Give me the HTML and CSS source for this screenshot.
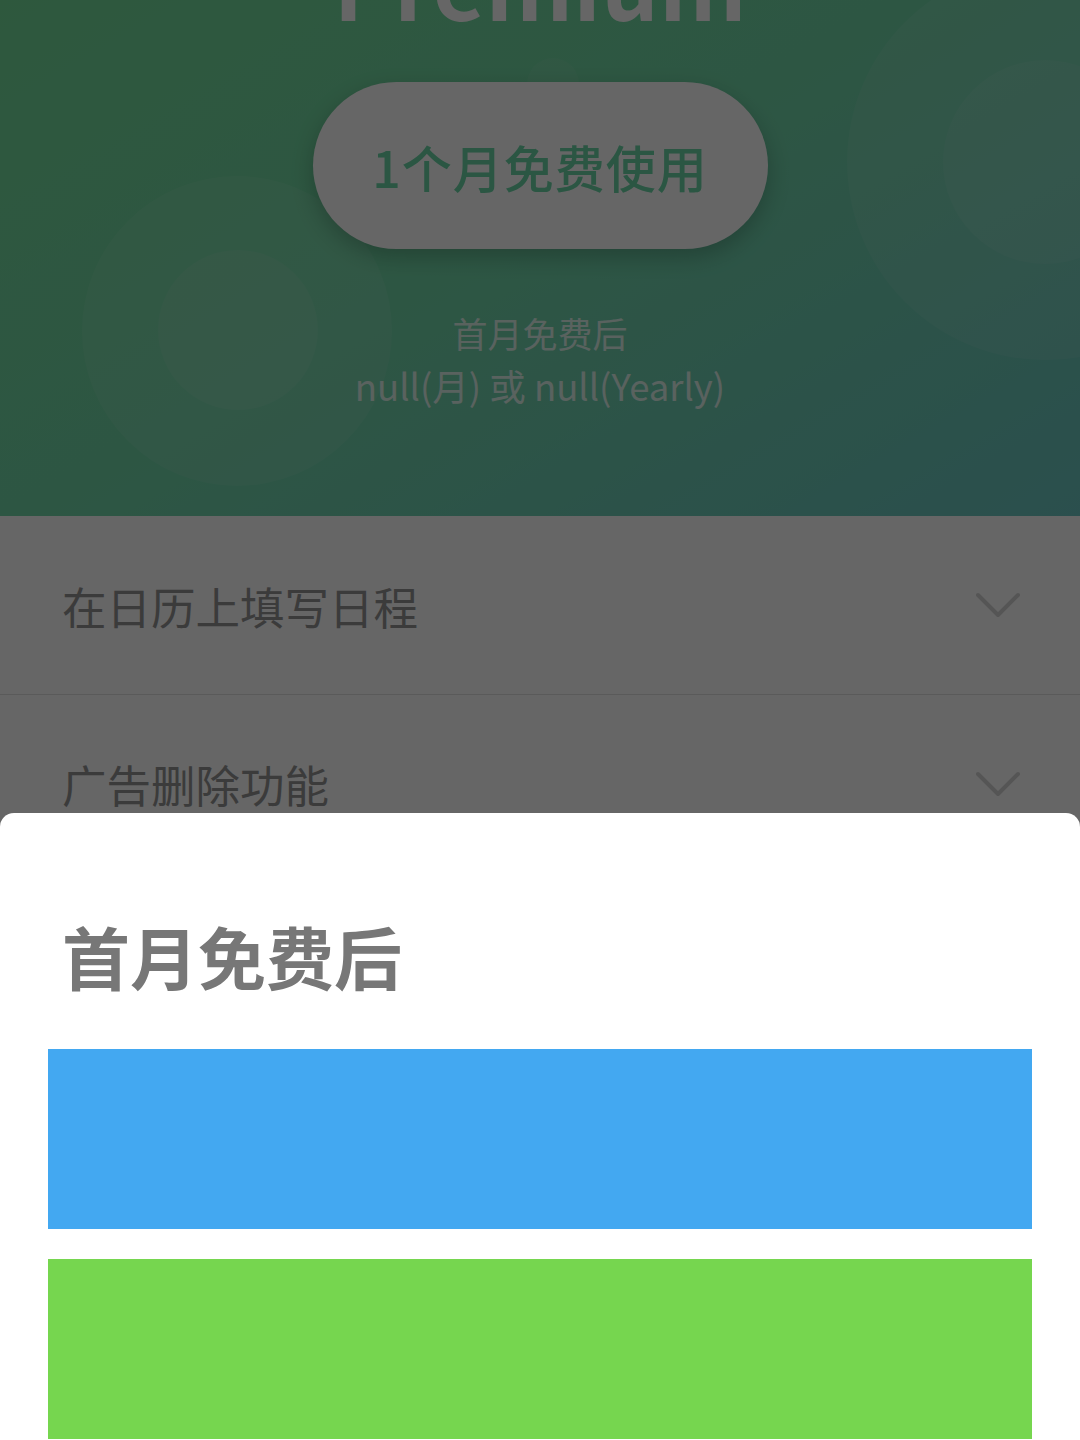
FILE: index.html
```html
<!DOCTYPE html>
<html lang="zh-CN">
<head>
<meta charset="utf-8">
<title>Premium</title>
<link rel="stylesheet" href="styles.css">
</head>
<body>
<div class="screen">
  <header class="hero">
    <span class="ring ring-left"></span>
    <span class="ring ring-left-inner"></span>
    <span class="ring ring-right"></span>
    <span class="ring ring-right-inner"></span>
    <span class="ring ring-top"></span>

    <h1 class="hero-title">Premium</h1>
    <button class="trial-btn" type="button">1个月免费使用</button>
    <p class="price-note">
      <span class="price-lead">首月免费后</span>
      <span class="price-values">null(月) 或 null(Yearly)</span>
    </p>
  </header>

  <ul class="features">
    <li class="feature">
      <span class="feature-label">在日历上填写日程</span>
      <svg class="chevron" viewBox="0 0 44 26" aria-hidden="true"><path d="M2 3 L22 23 L42 3"/></svg>
    </li>
    <li class="feature">
      <span class="feature-label">广告删除功能</span>
      <svg class="chevron" viewBox="0 0 44 26" aria-hidden="true"><path d="M2 3 L22 23 L42 3"/></svg>
    </li>
  </ul>

  <div class="scrim"></div>

  <section class="sheet">
    <h2 class="sheet-title">首月免费后</h2>
    <div class="plan plan-monthly"></div>
    <div class="plan plan-yearly"></div>
  </section>
</div>
</body>
</html>
```

FILE: styles.css
```css
* {
  box-sizing: border-box;
}

html, body {
  margin: 0;
  padding: 0;
}

body {
  font-family: "Noto Sans CJK SC", "Noto Sans", sans-serif;
  background: #ffffff;
}

.screen {
  position: relative;
  width: 1080px;
  height: 1440px;
  overflow: hidden;
  background: #ffffff;
}

/* ---------- hero ---------- */
.hero {
  position: relative;
  height: 516px;
  overflow: hidden;
  display: flex;
  flex-direction: column;
  align-items: center;
  background: linear-gradient(150deg, #74dd9a 0%, #72d8a8 45%, #6bc6c2 100%);
}

.ring {
  position: absolute;
  border-radius: 50%;
  background: rgba(255, 255, 255, 0.07);
}

.ring-left {
  left: 82px;
  top: 176px;
  width: 310px;
  height: 310px;
}

.ring-left-inner {
  left: 158px;
  top: 250px;
  width: 160px;
  height: 160px;
}

.ring-right {
  left: 847px;
  top: -36px;
  width: 396px;
  height: 396px;
}

.ring-right-inner {
  left: 943px;
  top: 60px;
  width: 204px;
  height: 204px;
}

.ring-top {
  left: 527px;
  top: 58px;
  width: 52px;
  height: 52px;
  background: rgba(255, 255, 255, 0.05);
}

.hero-title {
  position: relative;
  margin: -64px 0 0;
  font-size: 91px;
  line-height: 91px;
  font-weight: 700;
  color: #ffffff;
}

.trial-btn {
  position: relative;
  margin-top: 55px;
  width: 455px;
  height: 167px;
  border: none;
  border-radius: 84px;
  background: #ffffff;
  box-shadow: 0 8px 22px rgba(0, 0, 0, 0.22);
  font-family: inherit;
  font-size: 50px;
  font-weight: 500;
  color: #6cd6a8;
  letter-spacing: 1px;
}

.price-note {
  position: relative;
  margin: 57px 0 0;
  display: flex;
  flex-direction: column;
  align-items: center;
  line-height: 53px;
  color: rgba(255, 255, 255, 0.78);
}

.price-lead {
  font-size: 35px;
}

.price-values {
  font-size: 36.5px;
}

/* ---------- feature list ---------- */
.features {
  list-style: none;
  margin: 0;
  padding: 0;
}

.feature {
  height: 178px;
  display: flex;
  align-items: center;
  justify-content: space-between;
  padding: 0 60px 0 62px;
}

.feature + .feature {
  border-top: 1px solid #e2e2e2;
}

.feature-label {
  font-size: 44.5px;
  color: #939393;
}

.chevron {
  width: 44px;
  height: 26px;
  fill: none;
  stroke: #d4d4d4;
  stroke-width: 4;
  stroke-linecap: round;
  stroke-linejoin: round;
}

/* ---------- modal ---------- */
.scrim {
  position: absolute;
  inset: 0;
  background: rgba(0, 0, 0, 0.6);
}

.sheet {
  position: absolute;
  left: 0;
  right: 0;
  top: 813px;
  height: 700px;
  padding: 0 48px;
  background: #ffffff;
  border-radius: 14px 14px 0 0;
}

.sheet-title {
  margin: 95px 0 46px 14px;
  font-size: 68px;
  line-height: 95px;
  font-weight: 700;
  color: #777777;
}

.plan {
  height: 180px;
}

.plan + .plan {
  margin-top: 30px;
}

.plan-monthly {
  background: #43a8f1;
}

.plan-yearly {
  background: #76d64f;
}
```
